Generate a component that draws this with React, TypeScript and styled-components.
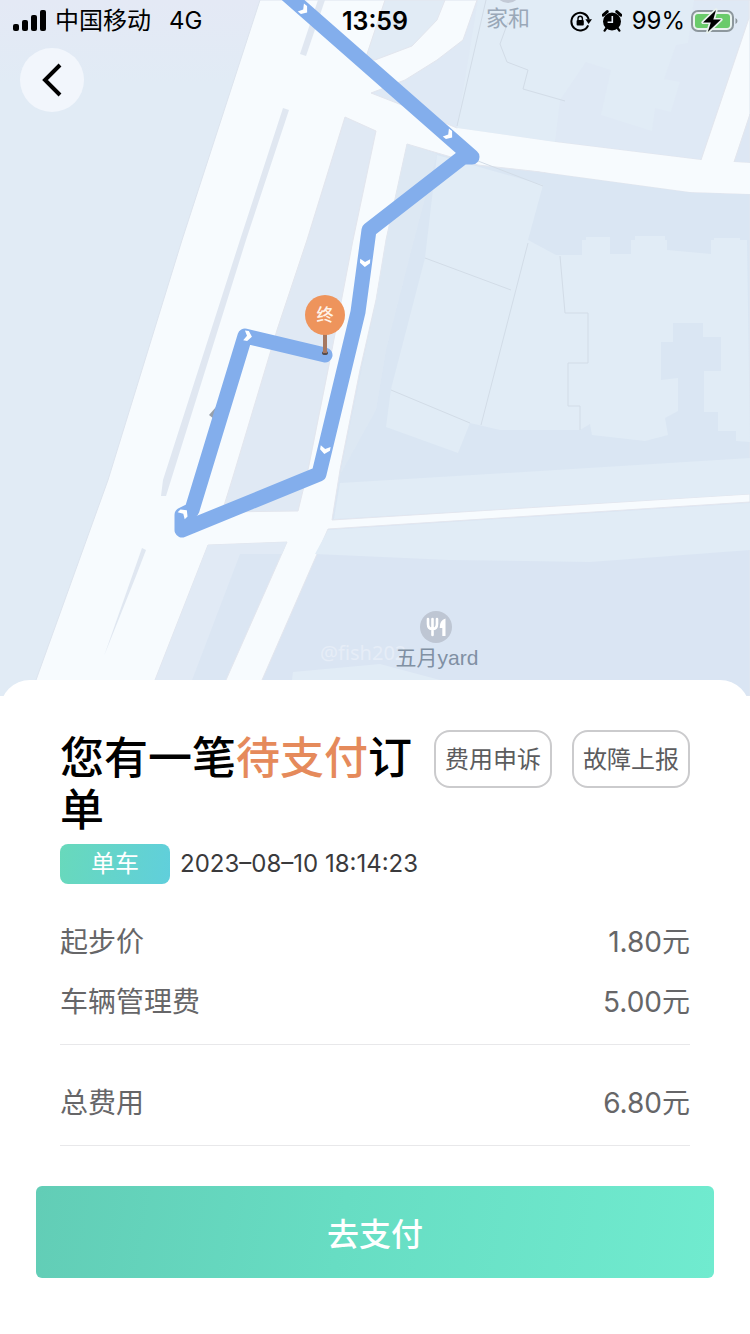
import React from 'react';
import styled, { createGlobalStyle } from 'styled-components';

const GlobalStyle = createGlobalStyle`
  *, *::before, *::after { box-sizing: border-box; }
  body {
    margin: 0;
    background: #fff;
    font-family: Inter, "Noto Sans CJK SC", sans-serif;
    color: #000;
  }
  h1, dl, dt, dd, p { margin: 0; font-weight: 400; }
  button { font-family: inherit; cursor: pointer; }
`;

const Page = styled.main`
  display: flex;
  flex-direction: column;
  min-height: 100vh;
  background: #fff;
`;

const MapSection = styled.section`
  position: relative;
  background: #eef2f8;
`;

const MapDrawing = styled.svg`
  display: block;
  width: 100%;
  height: auto;
`;

const MapOverlay = styled.div`
  position: absolute;
  inset: 0 0 auto;
`;

const StatusBar = styled.header`
  display: grid;
  grid-template-columns: 1fr auto 1fr;
  align-items: center;
  height: 40px;
  padding: 1px 12px 0;
  font-size: 24px;
  line-height: 38px;
`;

const StatusGroup = styled.div<{ $end?: boolean }>`
  display: flex;
  align-items: center;
  justify-content: ${(p) => (p.$end ? 'flex-end' : 'flex-start')};
  gap: ${(p) => (p.$end ? 10 : 8)}px;
`;

const Network = styled.span`
  margin-left: 10px;
`;

const Clock = styled.time`
  font-size: 25px;
  font-weight: 600;
`;

const BatteryLevel = styled.span`
  display: flex;
  align-items: center;
  gap: 5px;
`;

const BackButton = styled.button`
  display: flex;
  align-items: center;
  justify-content: center;
  width: 64px;
  height: 64px;
  margin: 8px 20px;
  padding: 0;
  border: 0;
  border-radius: 50%;
  background: #f2f6fc;
`;

const Sheet = styled.section`
  position: relative;
  flex: 1;
  margin-top: -16px;
  padding: 50px 36px 40px;
  border-radius: 30px 30px 0 0;
  background: #fff;
`;

const Details = styled.div`
  padding: 0 24px;
`;

const Heading = styled.div`
  display: flex;
  align-items: flex-start;
  gap: 20px;
`;

const Title = styled.h1`
  flex: 1;
  padding-top: 2px;
  font-size: 44px;
  font-weight: 500;
  line-height: 52px;
`;

const Pending = styled.span`
  color: #e58a5b;
`;

const OutlineButton = styled.button`
  flex: none;
  height: 58px;
  padding: 2px 9px 0;
  border: 2px solid #cbcbcd;
  border-radius: 16px;
  background: #fff;
  color: #5c5c5e;
  font-size: 24px;
  line-height: 52px;
`;

const TripInfo = styled.div`
  display: flex;
  align-items: center;
  gap: 10px;
  margin-top: 8px;
  color: #3a3a3c;
  font-size: 24px;
  line-height: 40px;
`;

const VehicleTag = styled.span`
  width: 110px;
  border-radius: 8px;
  background: linear-gradient(100deg, #68d9bb, #60cfdc);
  color: #fff;
  text-align: center;
`;

const FeeGroup = styled.dl`
  padding: 28px 0 12px;
  border-bottom: 1px solid #e8e8ea;
`;

const FeeRow = styled.div`
  display: flex;
  justify-content: space-between;
  color: #666668;
  font-size: 28px;
  line-height: 60px;
`;

const PayButton = styled.button`
  display: block;
  width: 100%;
  height: 92px;
  margin-top: 40px;
  padding: 0;
  border: 0;
  border-radius: 6px;
  background: linear-gradient(100deg, #62cdb6, #67ddc3 45%, #70ebcf);
  color: #fff;
  font-size: 32px;
  font-weight: 500;
`;

const SignalIcon = () => (
  <svg width="35" height="22" viewBox="0 0 35 22" aria-hidden="true">
    <rect x="1" y="14" width="6" height="7" rx="2" />
    <rect x="10" y="10" width="6" height="11" rx="2" />
    <rect x="19" y="5" width="6" height="16" rx="2" />
    <rect x="28" y="0" width="6" height="21" rx="2" />
  </svg>
);

const RotationLockIcon = () => (
  <svg width="22" height="22" viewBox="0 0 22 22" aria-hidden="true">
    <path d="M18.2 15.3A8.800 8.800 0 1 1 18.700 9.500" fill="none" stroke="#000" strokeWidth="2" />
    <path d="M15.400 9.200h6.600l-3.400 4.800z" />
    <rect x="6.600" y="9.900" width="7.200" height="5.600" rx="1" />
    <path d="M8 10V8.400a2.200 2.200 0 0 1 4.400 0V10" fill="none" stroke="#000" strokeWidth="1.400" />
  </svg>
);

const AlarmIcon = () => (
  <svg width="20" height="22" viewBox="0 0 20 22" aria-hidden="true">
    <circle cx="10" cy="11.500" r="9" />
    <path d="M1.200 5.200 5.200 1.600M18.800 5.200 14.800 1.600" fill="none" stroke="#000" strokeWidth="3" strokeLinecap="round" />
    <path d="M4.400 18l-1.800 2.600M15.600 18l1.800 2.600" fill="none" stroke="#000" strokeWidth="2.200" strokeLinecap="round" />
    <path d="M10.300 6v6.200H5.600" fill="none" stroke="#e5ecf6" strokeWidth="1.600" />
  </svg>
);

const BatteryIcon = () => (
  <svg width="48" height="26" viewBox="0 0 48 26" aria-hidden="true">
    <rect x="2" y="3" width="41" height="20" rx="6" fill="#e9f2ef" stroke="#8d979d" strokeWidth="2" />
    <rect x="5" y="6" width="35" height="14" rx="3" fill="#6acb6b" />
    <path d="M45.500 10v6q2-1 2-3t-2-3z" fill="#8d979d" />
    <path d="M26 2 13 14.400h7.800L17.800 24 31 11.600h-7.700z" stroke="#e9f2ef" strokeWidth="3.400" strokeLinejoin="round" />
    <path d="M26 2 13 14.400h7.800L17.800 24 31 11.600h-7.700z" />
  </svg>
);

const arrows = [
  { x: 304, y: 10, turn: 38 },
  { x: 449, y: 135, turn: 38 },
  { x: 365, y: 263, turn: 93 },
  { x: 325, y: 450, turn: 100 },
  { x: 184, y: 513, turn: 315 },
  { x: 248, y: 336, turn: 10 },
];

const RouteMap = () => (
  <MapDrawing viewBox="0 0 750 696" role="img" aria-label="行程路线">
    <defs>
      <linearGradient id="land" x1="0" y1="0" x2="0" y2="1">
        <stop offset="0" stopColor="#e4e9f5" />
        <stop offset="0.12" stopColor="#e1ebf5" />
        <stop offset="1" stopColor="#e1ebf5" />
      </linearGradient>
    </defs>
    <rect width="750" height="696" fill="url(#land)" />

    {/* road surface */}
    <path d="M260 0H750V696H30L36 680 108 480 182 240Z" fill="#f7fbfe" stroke="#dde4ee" strokeWidth="1" />

    {/* blocks between the roads */}
    <g stroke="#e3e6ee" strokeWidth="1">
      <path d="M385 0H445L437 20 412 46 375 60 366 57Z" fill="#e1ebf5" />
      <path d="M477 0H749V18L701 160 555 142 457 128 407 107 371 93 405 80 437 60 463 40Z" fill="#dfe9f5" />
      <path d="M750 114V163L734 162Z" fill="#dde7f4" />
      <path d="M407 144 478 165 550 173 690 192 750 194V494L332 520 340 470 360 370 376 300 386 240Z" fill="#dae6f3" />
      <path d="M345 117 376 131 353 240 330 360 308 470 298 511 222 512 232 480 277 330 307 240Z" fill="#e0e9f4" />
      <path d="M208 545 287 542 226 680 220 696H149L155 680Z" fill="#dbe6f3" />
      <path d="M328 529 750 502V696H255L262 680Z" fill="#dae5f3" />
    </g>
    <path d="M208 545 287 542 282 554H240L186 696H149Z" fill="#e1eaf5" />

    {/* lane dividers */}
    <g fill="#e0e7f1">
      <path d="M283 108 289 110 246 240 166 496H161L163 480 240 240Z" />
      <path d="M142 548 146 550 136 576 104 656Z" />
      <path d="M318 0H325L306 56 300 54Z" />
    </g>

    {/* lighter building footprints */}
    <path d="M407 144 437 154 414 240 386 350 376 410 340 475 376 300 386 240Z" fill="#e0e9f4" opacity=".6" />
    <g fill="#e1ecf6">
      <path d="M478 0H628L560 100 555 142 457 128Z" />
      <path d="M576 59 611 70 601 115 652 131 655 108 671 112 680 82 664 79 676 45 688 43 694 0H600Z" />
      <path d="M437 155 543 185 528 240 556 255H582V240H609V254H631V240H667V250L711 254V240H747L750 442 736 441V431H718V412H704V371H721V337H703V323H673V342H661V380L678 378V411L665 418 668 435 645 441 592 435 590 424 580 430H500L470 423 458 453 386 427 391 389 425 258Z" />
      <path d="M586 254V237H610V254ZM635 254V236H665V254ZM714 254V238H740V254Z" />
      <path d="M340 483 540 471 750 458V494L334 519Z" />
      <path d="M328 530 750 503V550L590 562 450 560 315 554Z" />
      <path d="M293 672 380 664 440 680V696H290Z" />
    </g>
    <path d="M457 128 555 142 701 160 750 163V194L690 192 550 173 477 160Z" fill="#f7fbfe" />

    {/* property boundaries */}
    <g fill="none" stroke="#d2dce7" strokeWidth="1">
      <path d="M486 0 457 126M508 22 500 44 507 62 528 70 523 89 565 101M478 161 543 186" />
      <path d="M528 243 481 425M425 258 511 290M391 390 470 423" />
      <path d="M560 256 565 313H588V363H568V406H580V430" />
    </g>

    {/* places */}
    <circle cx="508" cy="-10" r="13" fill="#c3cad6" />
    <text x="508" y="26" textAnchor="middle" fontSize="22" fill="#9aa8b8">家和</text>
    <circle cx="436" cy="627" r="16" fill="#bec6d3" />
    <path d="M428 619V624Q428 629 432.500 629Q437 629 437 624V619M432.500 619V635" fill="none" stroke="#fff" strokeWidth="2.600" strokeLinecap="round" />
    <path d="M445.500 618.500V636H442.300V628H439.700Q439.500 620 445.500 618.500Z" fill="#fff" />
    <text x="320" y="660" fontSize="20" fill="#e6edf7" fontFamily="'Noto Sans', sans-serif">@fish202</text>
    <text x="437" y="665" textAnchor="middle" fontSize="21" fill="#8090a3" fontFamily="'Liberation Sans', 'Noto Sans CJK SC', sans-serif">五月yard</text>

    {/* ride track */}
    <path d="M209 415 216 407 214 419Z" fill="#97a0ac" />
    <path
      d="M284 -8 472 157H463L369 230 358 312 319 474 182 530V515L192 510 245 336 325 355"
      fill="none"
      stroke="#83aeec"
      strokeWidth="15"
      strokeLinecap="round"
      strokeLinejoin="round"
    />
    {arrows.map((a) => (
      <path
        key={`${a.x}-${a.y}`}
        d="M-4 -5H0L4 0 0 5H-4L-1 0Z"
        fill="#fff"
        transform={`translate(${a.x} ${a.y}) rotate(${a.turn})`}
      />
    ))}

    {/* end marker */}
    <ellipse cx="325" cy="353" rx="3" ry="2" fill="#554c4e" />
    <path d="M325 332V353" stroke="#a67861" strokeWidth="4" />
    <circle cx="325" cy="315" r="20" fill="#ee945c" />
    <text x="325" y="321" textAnchor="middle" fontSize="17" fontWeight="500" fill="#fff3e8">终</text>
  </MapDrawing>
);

const fees = [
  { name: '起步价', amount: '1.80元' },
  { name: '车辆管理费', amount: '5.00元' },
];

const total = [{ name: '总费用', amount: '6.80元' }];

const FeeList = ({ items }: { items: { name: string; amount: string }[] }) => (
  <FeeGroup>
    {items.map((item) => (
      <FeeRow key={item.name}>
        <dt>{item.name}</dt>
        <dd>{item.amount}</dd>
      </FeeRow>
    ))}
  </FeeGroup>
);

export default function App() {
  return (
    <Page>
      <GlobalStyle />
      <MapSection>
        <RouteMap />
        <MapOverlay>
          <StatusBar>
            <StatusGroup>
              <SignalIcon />
              <span>中国移动</span>
              <Network>4G</Network>
            </StatusGroup>
            <Clock>13:59</Clock>
            <StatusGroup $end>
              <RotationLockIcon />
              <AlarmIcon />
              <BatteryLevel>
                99%
                <BatteryIcon />
              </BatteryLevel>
            </StatusGroup>
          </StatusBar>
          <BackButton type="button" aria-label="返回">
            <svg width="22" height="34" viewBox="0 0 22 34" aria-hidden="true">
              <path d="M19 2 4 17 19 32" fill="none" stroke="#000" strokeWidth="4" />
            </svg>
          </BackButton>
        </MapOverlay>
      </MapSection>

      <Sheet>
        <Details>
          <Heading>
            <Title>
              您有一笔<Pending>待支付</Pending>订单
            </Title>
            <OutlineButton type="button">费用申诉</OutlineButton>
            <OutlineButton type="button">故障上报</OutlineButton>
          </Heading>
          <TripInfo>
            <VehicleTag>单车</VehicleTag>
            <time dateTime="2023-08-10T18:14:23">2023–08–10 18:14:23</time>
          </TripInfo>
          <FeeList items={fees} />
          <FeeList items={total} />
        </Details>
        <PayButton type="button">去支付</PayButton>
      </Sheet>
    </Page>
  );
}
